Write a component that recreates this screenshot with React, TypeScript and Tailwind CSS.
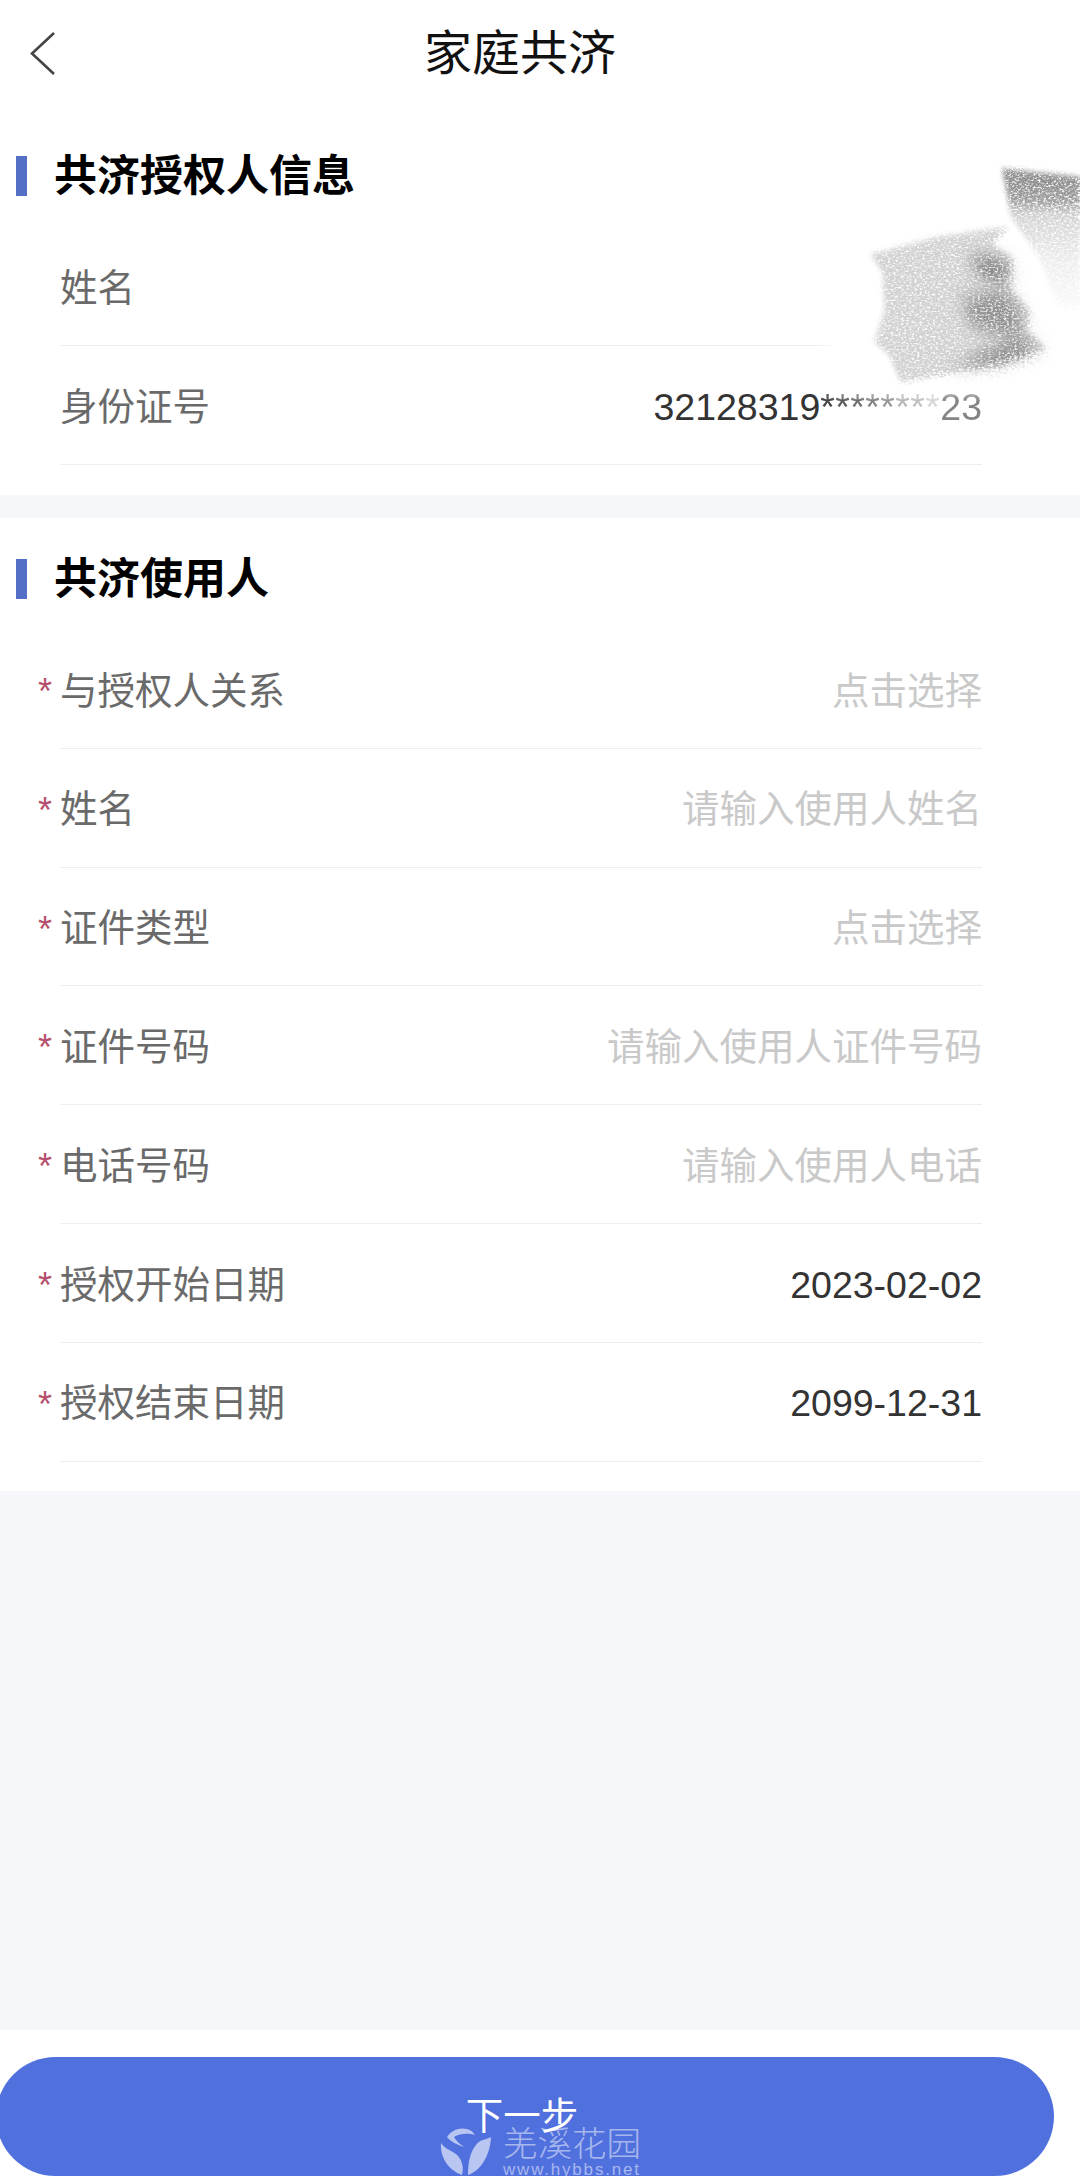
import React from 'react'

const cjk = '"Liberation Sans", "Noto Sans CJK SC", sans-serif'

interface FormRow {
  label: string
  value: string
  filled?: boolean
}

const userRows: FormRow[] = [
  { label: '与授权人关系', value: '点击选择' },
  { label: '姓名', value: '请输入使用人姓名' },
  { label: '证件类型', value: '点击选择' },
  { label: '证件号码', value: '请输入使用人证件号码' },
  { label: '电话号码', value: '请输入使用人电话' },
  { label: '授权开始日期', value: '2023-02-02', filled: true },
  { label: '授权结束日期', value: '2099-12-31', filled: true },
]

const starFade = ['opacity-90', 'opacity-80', 'opacity-70', 'opacity-60', 'opacity-50', 'opacity-35', 'opacity-30', 'opacity-20']

function SectionTitle({ title }: { title: string }) {
  return (
    <div className="flex h-[40px] items-center pl-[16px]">
      <span className="h-[40px] w-[11px] bg-[#5470c6]" />
      <h2 className="ml-[27px] text-[43px] leading-none font-bold text-black">{title}</h2>
    </div>
  )
}

function Row({ row }: { row: FormRow }) {
  return (
    <div className="relative flex h-[118.8px] items-center justify-between border-b border-[#eeeeee] pt-[5px]">
      <span className="absolute top-[44px] left-[-22px] text-[36px] leading-none text-[#b5506e]">*</span>
      <span className="text-[37.5px] leading-none text-[#6a6a6a]">{row.label}</span>
      <span className={`text-[37.5px] leading-none ${row.filled ? 'text-[#333333]' : 'text-[#c9c9c9]'}`}>{row.value}</span>
    </div>
  )
}

// 涂抹遮挡：用噪声滤镜画出铅笔涂抹的质感
function Scribble() {
  return (
    <svg className="absolute top-[160px] left-[820px]" width="260" height="240" viewBox="0 0 260 240">
      <defs>
        <filter id="pencil" x="-15%" y="-15%" width="130%" height="130%">
          <feGaussianBlur in="SourceGraphic" stdDeviation="2" result="b" />
          <feTurbulence type="fractalNoise" baseFrequency="0.38 0.55" numOctaves="4" seed="11" result="n" />
          <feDisplacementMap in="b" in2="n" scale="12" result="d" />
          <feColorMatrix in="n" type="matrix" values="0 0 0 0 0 0 0 0 0 0 0 0 0 0 0 0 0 0 -3.2 2.5" result="m" />
          <feComposite in="d" in2="m" operator="in" />
          <feGaussianBlur stdDeviation="0.7" />
        </filter>
        <filter id="pencilSoft" x="-30%" y="-30%" width="160%" height="160%">
          <feGaussianBlur in="SourceGraphic" stdDeviation="8" result="b" />
          <feTurbulence type="fractalNoise" baseFrequency="0.38 0.55" numOctaves="4" seed="23" result="n" />
          <feDisplacementMap in="b" in2="n" scale="14" result="d" />
          <feColorMatrix in="n" type="matrix" values="0 0 0 0 0 0 0 0 0 0 0 0 0 0 0 0 0 0 -4 2.8" result="m" />
          <feComposite in="d" in2="m" operator="in" />
          <feGaussianBlur stdDeviation="0.7" />
        </filter>
        <filter id="soft">
          <feGaussianBlur stdDeviation="6" />
        </filter>
        <linearGradient id="fadeDown" x1="0" y1="0" x2="0" y2="1">
          <stop offset="0" stopColor="#8a8a8a" />
          <stop offset="0.22" stopColor="#a0a0a0" />
          <stop offset="0.32" stopColor="#d4d4d4" />
          <stop offset="0.65" stopColor="#eeeeee" />
          <stop offset="1" stopColor="#fbfbfb" />
        </linearGradient>
      </defs>
      <rect x="8" y="60" width="252" height="172" fill="#ffffff" filter="url(#soft)" />
      <g filter="url(#pencil)">
        <path d="M50 94 L118 76 L188 66 L172 84 L192 96 L190 128 L210 150 L205 168 L226 188 L180 204 L80 222 L68 194 L54 182 L64 150 L62 112 Z" fill="#d2d2d2" />
      </g>
      <g filter="url(#pencilSoft)">
        <path d="M150 92 L186 100 L188 122 L158 116 Z" fill="#777777" />
        <path d="M140 135 L186 128 L204 158 L198 178 L150 168 Z" fill="#929292" />
        <path d="M130 208 L165 190 L204 178 L220 188 L180 202 Z" fill="#777777" />
      </g>
      <g filter="url(#pencil)">
        <path d="M182 8 L260 16 L260 150 L238 146 L218 96 L190 56 Z" fill="url(#fadeDown)" />
      </g>
    </svg>
  )
}

// 水印
function Watermark() {
  return (
    <div className="absolute top-[2127px] left-[440px] flex items-start text-white/50">
      <svg className="text-white/60" width="52" height="50" viewBox="0 0 52 50" fill="currentColor">
        <path d="M7 10 C11 3 20 0 27 2 C31 3 33 5 35 8 C29 6 20 6 14 10 C16 14 20 17 24 20 C18 18 11 15 7 10 Z" />
        <path d="M1 16 C0 28 6 42 22 48 C24 40 22 32 16 27 C10 23 4 21 1 16 Z" />
        <path d="M51 10 C46 13 40 12 36 18 C30 25 28 36 28 48 C40 44 50 30 51 10 Z" />
      </svg>
      <div className="ml-[11px] flex flex-col">
        <span className="text-[34.5px] leading-[35px] font-light">羌溪花园</span>
        <span className="text-[17px] leading-[15px] tracking-[1.8px]" style={{ fontFamily: '"Liberation Sans", sans-serif' }}>www.hybbs.net</span>
      </div>
    </div>
  )
}

export default function App() {
  return (
    <div className="relative flex h-[2181px] w-[1080px] flex-col overflow-hidden bg-white" style={{ fontFamily: cjk }}>
      {/* Header */}
      <header className="relative flex h-[105px] items-center justify-center pt-[3px] pr-[40px]">
        <svg className="absolute top-[32px] left-[30px]" width="26" height="44" viewBox="0 0 26 44" fill="none">
          <path d="M24 1 L2 21.5 L24 42" stroke="#444444" strokeWidth="2.6" />
        </svg>
        <h1 className="text-[48px] leading-none font-normal text-[#111111]">家庭共济</h1>
      </header>

      {/* 共济授权人信息 */}
      <section className="h-[390px] pt-[51px]">
        <SectionTitle title="共济授权人信息" />
        <div className="mt-[31px] mr-[98px] ml-[60px]">
          <div className="flex h-[119px] items-center border-b border-[#eeeeee] pt-[6px] text-[37.5px] leading-none text-[#6a6a6a]">姓名</div>
          <div className="flex h-[119px] items-center justify-between border-b border-[#eeeeee] pt-[6px] text-[37.5px] leading-none">
            <span className="text-[#6a6a6a]">身份证号</span>
            <span className="text-[#333333]">
              32128319
              {starFade.map((fade, i) => (
                <span key={i} className={`${fade} tracking-[0.4px]`}>*</span>
              ))}
              <span className="opacity-60">23</span>
            </span>
          </div>
        </div>
      </section>

      <div className="h-[23px] bg-[#f6f7fa]" />

      {/* 共济使用人 */}
      <section className="pt-[41px] pb-[29px]">
        <SectionTitle title="共济使用人" />
        <div className="mt-[31px] mr-[98px] ml-[60px]">
          {userRows.map((row) => (
            <Row key={row.label} row={row} />
          ))}
        </div>
      </section>

      <div className="flex-1 bg-[#f6f7fa]" />

      {/* Footer */}
      <footer className="h-[151px] pt-[27px]">
        <button className="ml-[-4px] flex h-[119px] w-[1058px] items-center justify-center rounded-full bg-[#5070de] pr-[6px] text-[37.5px] leading-none text-white">
          下一步
        </button>
      </footer>

      <Scribble />
      <Watermark />
    </div>
  )
}
